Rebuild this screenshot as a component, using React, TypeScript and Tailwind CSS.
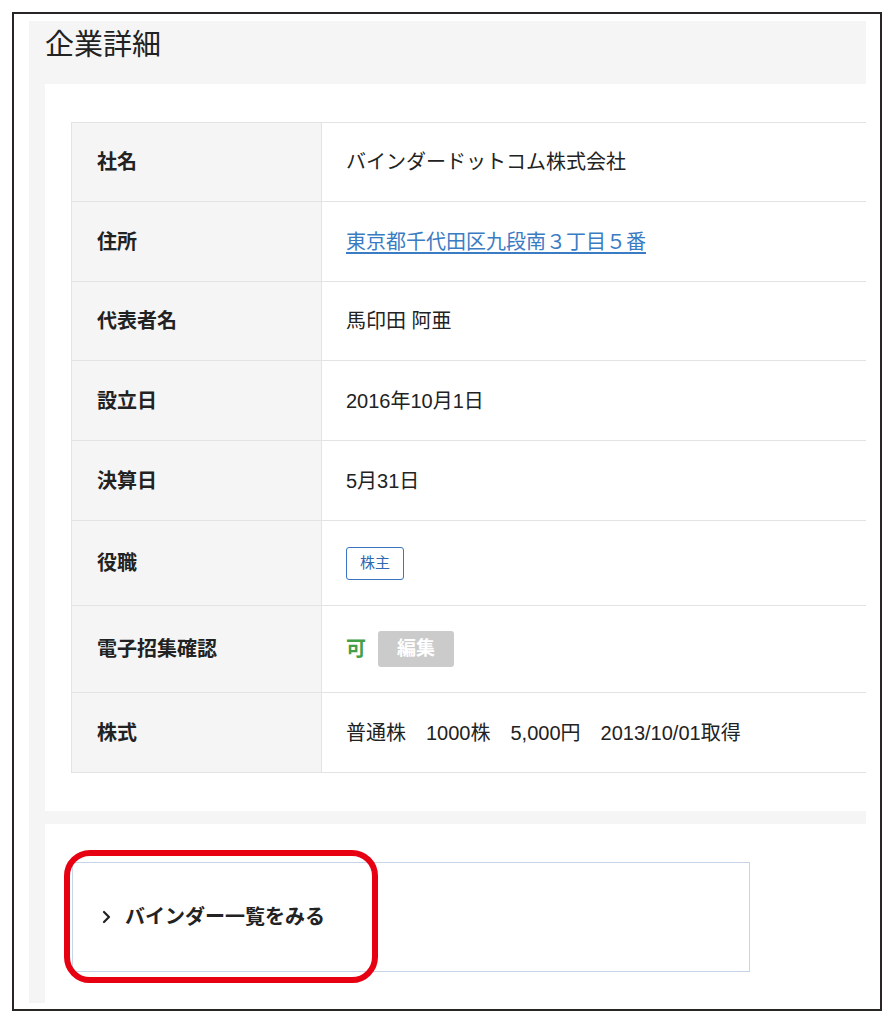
import React from 'react';

type Row = { label: string; height: string; value: React.ReactNode };

const rows: Row[] = [
  { label: '社名', height: 'h-[79px]', value: 'バインダードットコム株式会社' },
  {
    label: '住所',
    height: 'h-[80px]',
    value: <a className="text-[#3a7cc4] underline underline-offset-[3px]">東京都千代田区九段南３丁目５番</a>,
  },
  { label: '代表者名', height: 'h-[79px]', value: '馬印田 阿亜' },
  { label: '設立日', height: 'h-[80px]', value: '2016年10月1日' },
  { label: '決算日', height: 'h-[80px]', value: '5月31日' },
  {
    label: '役職',
    height: 'h-[85px]',
    value: (
      <span className="flex h-[33px] w-[58px] items-center justify-center rounded-[3px] border-[1.5px] border-[#3b74bf] text-[15px] text-[#2f67b2]">
        株主
      </span>
    ),
  },
  {
    label: '電子招集確認',
    height: 'h-[87px]',
    value: (
      <div className="flex items-center gap-3">
        <span className="font-bold text-[#43a047]">可</span>
        <button className="flex h-[36px] w-[76px] items-center justify-center rounded-[3px] bg-[#cbcbcb] text-[19px] font-bold text-white">
          編集
        </button>
      </div>
    ),
  },
  { label: '株式', height: 'h-[80px]', value: '普通株　1000株　5,000円　2013/10/01取得' },
];

const App: React.FC = () => {
  return (
    <div className="h-[1024px] w-[894px] bg-white pl-3 pt-3 font-['Liberation_Sans','Noto_Sans_CJK_JP',sans-serif] text-[#222]">
      <div className="h-[999px] w-[870px] border-2 border-[#2a2525] pl-[15px] pt-[7px]">
        <div className="flex h-[982px] w-[837px] flex-col bg-[#f5f5f5] pl-4">
          <div className="h-[63px] pt-[7px]">
            <h1 className="text-[29px] leading-[1.2]">企業詳細</h1>
          </div>

          <div className="bg-white pb-[38px] pl-[26px] pt-[38px]">
            <div className="border-l border-t border-[#e3e3e3]">
              {rows.map((row) => (
                <div key={row.label} className={`flex border-b border-[#e3e3e3] ${row.height}`}>
                  <div className="flex w-[250px] shrink-0 items-center border-r border-[#e3e3e3] bg-[#f5f5f5] pl-[25px] text-[20px] font-bold">
                    {row.label}
                  </div>
                  <div className="flex flex-1 items-center pl-6 text-[20px]">{row.value}</div>
                </div>
              ))}
            </div>
          </div>

          <div className="h-[13px] shrink-0" />

          <div className="relative flex-1 bg-white pl-[27px] pt-[38px]">
            <div className="flex h-[110px] w-[678px] items-center gap-[14px] border-[1.5px] border-[#c5d4e6] pl-[29px] text-[20px] font-bold">
              <svg width="9" height="14" viewBox="0 0 9 14" fill="none">
                <path d="M2 2l5 5-5 5" stroke="#222" strokeWidth="2.2" strokeLinecap="round" strokeLinejoin="round" />
              </svg>
              <span>バインダー一覧をみる</span>
            </div>
            <div className="absolute left-[19px] top-[26px] h-[133px] w-[314px] rounded-[26px] border-[6px] border-[#e60012]" />
          </div>
        </div>
      </div>
    </div>
  );
};

export default App;
